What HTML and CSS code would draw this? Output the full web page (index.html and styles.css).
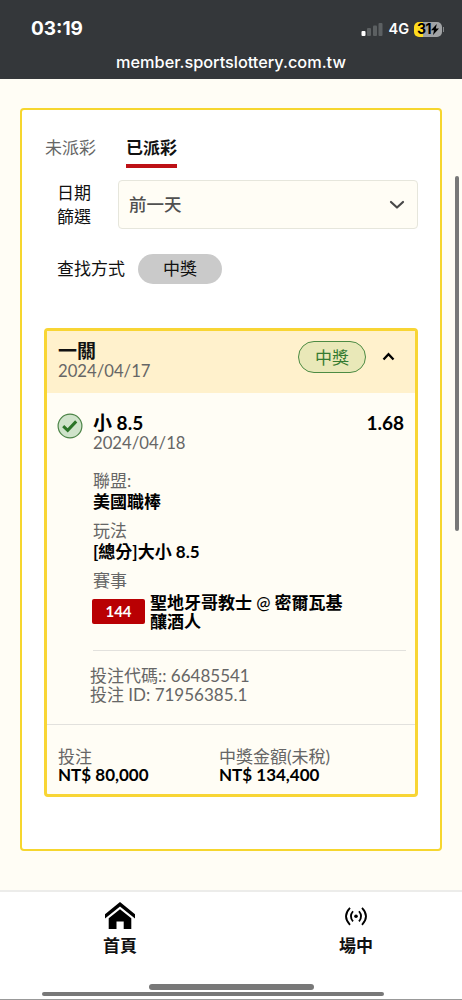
FILE: index.html
```html
<!DOCTYPE html>
<html lang="zh-Hant">
<head>
<meta charset="utf-8">
<meta name="viewport" content="width=device-width, initial-scale=1">
<title>member.sportslottery.com.tw</title>
<link rel="stylesheet" href="styles.css">
</head>
<body>
<div class="screen">
  <header class="browser-bar">
    <div class="status">
      <span class="clock">03:19</span>
      <div class="indicators">
        <svg class="signal" width="22" height="14" viewBox="0 0 22 14">
          <rect x="0.500" y="9" width="4" height="5" rx="1" fill="#fff"/>
          <rect x="6" y="6" width="4" height="8" rx="1" fill="#5c6062"/>
          <rect x="12" y="3.5" width="4" height="10.5" rx="1" fill="#5c6062"/>
          <rect x="17.500" y="1" width="4" height="13" rx="1" fill="#5c6062"/>
        </svg>
        <span class="network">4G</span>
        <div class="battery">
          <span class="battery-level">31</span>
          <svg width="8" height="11" viewBox="0 0 8 11"><path d="M5.800 0 0 6.300h3L2 11l6-6.500H4.800z" fill="#000"/></svg>
        </div>
        <span class="battery-tip"></span>
      </div>
    </div>
    <div class="url">member.sportslottery.com.tw</div>
  </header>

  <main class="page">
    <section class="panel">
      <nav class="tabs">
        <span class="tab">未派彩</span>
        <span class="tab tab-active">已派彩</span>
      </nav>
      <div class="date-filter">
        <span class="filter-label">日期<br>篩選</span>
        <div class="select">
          <span>前一天</span>
          <svg width="16" height="10" viewBox="0 0 16 10"><path d="M2 2l6 5.500L14 2" fill="none" stroke="#484848" stroke-width="2.200" stroke-linecap="round" stroke-linejoin="round"/></svg>
        </div>
      </div>
      <div class="search-mode">
        <span>查找方式</span>
        <span class="chip">中獎</span>
      </div>

      <article class="ticket">
        <div class="ticket-head">
          <div class="ticket-name">
            <span class="title">一關</span>
            <span class="date">2024/04/17</span>
          </div>
          <span class="win-badge">中獎</span>
          <svg class="collapse" width="13" height="9" viewBox="0 0 13 9"><path d="M1.500 7.500l5-5.300 5 5.300" fill="none" stroke="#000" stroke-width="2.300"/></svg>
        </div>

        <div class="selection">
          <svg class="check" width="26" height="26" viewBox="0 0 26 26">
            <circle cx="13" cy="13" r="11.900" fill="#cfe3ca" stroke="#4d8448" stroke-width="1.200"/>
            <path d="M6.200 13.200l4.500 4.100 8.500-8.900" fill="none" stroke="#2b7427" stroke-width="3"/>
          </svg>
          <div class="selection-body">
            <div class="pick"><span>小 8.5</span><span class="odds">1.68</span></div>
            <div class="date">2024/04/18</div>
            <dl class="facts">
              <dt>聯盟:</dt><dd>美國職棒</dd>
              <dt>玩法</dt><dd>[總分]大小 8.5</dd>
              <dt>賽事</dt>
            </dl>
            <div class="match">
              <span class="match-no">144</span>
              <span class="teams">聖地牙哥教士 <span class="at">@</span> 密爾瓦基<br>釀酒人</span>
            </div>
          </div>
        </div>
        <div class="codes">投注代碼:: 66485541<br>投注 ID: 71956385.1</div>
        <div class="totals">
          <div class="total">投注<br><b class="amount">NT$ 80,000</b></div>
          <div class="total">中獎金額(未稅)<br><b class="amount">NT$ 134,400</b></div>
        </div>
      </article>
    </section>
  </main>

  <footer class="bottom-nav">
    <div class="nav-item">
      <svg width="30" height="28" viewBox="0 0 30 28"><path d="M0 12.200 15 0l15 12.200v4.300L15 4.600 0 16.500z"/><path d="M15 7.300 26.300 16.300V27H18.700v-7.600h-7.200V27H3.700V16.300z"/></svg>
      <span>首頁</span>
    </div>
    <div class="nav-item">
      <svg width="24" height="28" viewBox="0 0 24 28"><circle cx="12" cy="14.300" r="1.800"/><g fill="none" stroke="#000" stroke-width="1.800"><path d="M9 9.200Q4.800 14.300 9 19.400M15 9.200q4.200 5.100 0 10.200"/><path d="M6 5.800Q-2 14.300 6 22.800M18 5.800q8 8.500 0 17"/></g></svg>
      <span>場中</span>
    </div>
  </footer>

  <div class="page-scrollbar"></div>
  <div class="home-indicator"></div>
  <div class="horizontal-scrollbar"></div>
</div>
</body>
</html>
```

FILE: styles.css
```css
* { box-sizing: border-box; }

body {
  margin: 0;
  background: #fff;
  color: #111;
  font: 17px/20px Lato, "Noto Sans CJK TC", sans-serif;
}

.screen {
  position: relative;
  display: flex;
  flex-direction: column;
  width: 462px;
  height: 1000px;
  overflow: hidden;
  border-bottom: 1px solid #999;
}

.browser-bar {
  height: 79px;
  padding-top: 17px;
  background: #34373a;
  color: #fff;
  font-family: Inter, sans-serif;
}

.status {
  display: flex;
  align-items: center;
  justify-content: space-between;
  height: 24px;
  padding: 0 18px 0 31px;
}

.clock { font-size: 19px; font-weight: 700; }
.indicators { display: flex; align-items: center; }
.signal { margin-top: -1px; }
.network { margin-left: 5px; font-size: 14.500px; font-weight: 600; }

.battery {
  display: flex;
  align-items: center;
  justify-content: center;
  width: 28px;
  height: 15px;
  margin-left: 5px;
  border-radius: 5px;
  background: linear-gradient(90deg, #ffdc1e 9px, #a1a3a5 9px);
  color: #000;
}

.battery-level { font-size: 14px; font-weight: 700; letter-spacing: -.5px; }
.battery-tip { width: 1px; height: 5px; margin-left: 1px; background: #85888a; }

.url {
  margin-top: 11px;
  text-align: center;
  font-size: 16.300px;
  font-weight: 500;
}

.page {
  height: 811px;
  padding: 29px 20px 0;
  background: #fffdf5;
}

.panel {
  height: 743px;
  padding: 24px 22px 0;
  border: 2.500px solid #f6d62e;
  border-radius: 4px;
  background: #fff;
}

.tabs { display: flex; gap: 30px; padding-left: 1px; }
.tab { height: 34px; line-height: 27px; color: #666; }
.tab-active { border-bottom: 4px solid #bd1116; color: #111; font-weight: 700; }

.date-filter {
  display: flex;
  justify-content: space-between;
  margin-top: 12px;
  padding-left: 13px;
}

.filter-label { padding-top: 1px; line-height: 24px; }

.select {
  display: flex;
  align-items: center;
  justify-content: space-between;
  width: 300px;
  height: 49px;
  padding: 0 12px 0 10px;
  border: 1px solid #e6e6dc;
  border-radius: 4px;
  background: #fffdf5;
  color: #505050;
  font-size: 17.500px;
  font-weight: 500;
}

.search-mode { display: flex; align-items: center; gap: 13px; margin-top: 25px; padding-left: 13px; }

.chip {
  width: 84px;
  height: 30px;
  border-radius: 15px;
  background: #cacaca;
  text-align: center;
  line-height: 30px;
}

.ticket {
  height: 469px;
  margin-top: 44px;
  border: 3px solid #f8d534;
  border-radius: 4px;
  background: #fffdf5;
}

.ticket-head {
  display: flex;
  align-items: flex-start;
  height: 62px;
  padding: 10px 19px 0 11px;
  background: #fff1cc;
}

.ticket-name { display: flex; flex: 1; flex-direction: column; }
.title { font-size: 19px; font-weight: 700; }
.date { color: #666; font-size: 16.700px; line-height: 21px; }

.win-badge {
  width: 68px;
  height: 32px;
  border: 1.500px solid #4d8b43;
  border-radius: 16px;
  background: #e9e8b8;
  color: #357b31;
  text-align: center;
  line-height: 31px;
}

.collapse { margin: 11px 1px 0 16px; }

.selection { display: flex; padding: 20px 9px 0 10px; }
.check { flex: none; }

.selection-body {
  flex: 1;
  height: 238px;
  margin-left: 10px;
  border-bottom: 1px solid #e2e1dd;
}

.pick {
  display: flex;
  justify-content: space-between;
  padding-right: 2px;
  color: #000;
  font-size: 19px;
  font-weight: 700;
}

.facts { margin: 16px 0 0; }
.facts dt { color: #666; line-height: 21px; }
.facts dd { margin: 0 0 8px; color: #000; font-size: 17px; font-weight: 700; line-height: 21px; }

.match { display: flex; align-items: flex-start; gap: 5px; margin: 3px 0 0 -1px; }

.match-no {
  width: 53px;
  height: 25px;
  margin-top: 5px;
  border-radius: 2px;
  background: #b90003;
  color: #fff;
  font-size: 15px;
  font-weight: 700;
  text-align: center;
  line-height: 25px;
}

.teams { color: #000; font-weight: 700; line-height: 18.500px; }
.at { font-weight: 500; }

.codes {
  height: 74px;
  padding: 16px 0 0 43px;
  border-bottom: 1px solid #e2e1dd;
  color: #666;
  line-height: 18.500px;
}

.totals { display: flex; padding: 23px 0 0 11px; }
.total { width: 161px; color: #666; line-height: 18px; }
.amount { color: #000; font-weight: 700; }

.bottom-nav {
  display: flex;
  justify-content: center;
  gap: 136px;
  flex: 1;
  padding: 10px 0 0 14px;
  border-top: 2px solid #ececea;
  background: #fff;
}

.nav-item {
  display: flex;
  flex-direction: column;
  align-items: center;
  gap: 6px;
  width: 100px;
  font-weight: 700;
}

/* Scroll and home indicators float over the page. */
.page-scrollbar,
.home-indicator,
.horizontal-scrollbar {
  position: absolute;
  border-radius: 3px;
  background: #787878;
}

.page-scrollbar { top: 176px; right: 3px; width: 4px; height: 355px; }
.home-indicator { left: 149px; bottom: 9px; width: 165px; height: 6px; }
.horizontal-scrollbar { left: 42px; bottom: 3px; width: 342px; height: 4px; }
```
